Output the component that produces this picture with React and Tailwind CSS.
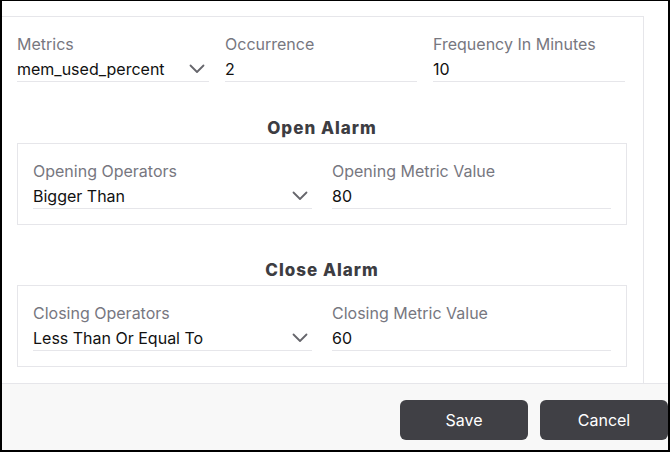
import React from 'react';

const font = { fontFamily: 'Inter, "Open Sans", sans-serif' };

function Chevron() {
  return (
    <svg width="16" height="10" viewBox="0 0 16 10" className="shrink-0 text-[#66666c]">
      <polyline points="1.5,1.5 8,8 14.5,1.5" fill="none" stroke="currentColor" strokeWidth="1.8" strokeLinecap="round" strokeLinejoin="round" />
    </svg>
  );
}

function Field({ label, value, select }) {
  return (
    <div className="flex flex-col min-w-0">
      <span className="text-[16px] leading-6 text-[#77777f]">{label}</span>
      <div className="flex items-center justify-between h-[26px] border-b border-[#e6e6ea] pr-[4px]">
        <span className="text-[16px] leading-6 text-[#111]">{value}</span>
        {select && <Chevron />}
      </div>
    </div>
  );
}

function AlarmBox({ title, fields }) {
  return (
    <div className="w-[610px]">
      <h3 className="text-center text-[17px] leading-6 font-extrabold tracking-[1px] text-[#3d3d42]">{title}</h3>
      <div className="mt-[3px] h-[82px] border border-[#e6e6ea] px-[15px] pt-[15px] grid grid-cols-2 gap-5">
        {fields.map((f) => (
          <Field key={f.label} {...f} />
        ))}
      </div>
    </div>
  );
}

export default function App() {
  return (
    <div style={font} className="w-[670px] h-[452px] bg-white border-l-2 border-r-2 border-t border-b-2 border-black flex flex-col overflow-hidden">
      <div className="flex-1 pt-[15px] min-h-0">
        <div className="w-[642px] h-full border-t border-r border-[#e6e6ea] pl-[15px] pt-[15px]">
          <div className="w-[608px] grid grid-cols-3 gap-4">
            <Field label="Metrics" value="mem_used_percent" select />
            <Field label="Occurrence" value="2" />
            <Field label="Frequency In Minutes" value="10" />
          </div>
          <div className="mt-[34px]">
            <AlarmBox
              title="Open Alarm"
              fields={[
                { label: 'Opening Operators', value: 'Bigger Than', select: true },
                { label: 'Opening Metric Value', value: '80' },
              ]}
            />
          </div>
          <div className="mt-[33px]">
            <AlarmBox
              title="Close Alarm"
              fields={[
                { label: 'Closing Operators', value: 'Less Than Or Equal To', select: true },
                { label: 'Closing Metric Value', value: '60' },
              ]}
            />
          </div>
        </div>
      </div>
      <div className="h-[67px] shrink-0 border-t border-[#e6e6ea] bg-[#f8f8f8] flex items-start justify-end gap-3 pt-4">
        <button type="button" className="w-32 h-10 rounded-md bg-[#404045] text-white text-[16px]">
          Save
        </button>
        <button type="button" className="w-32 h-10 rounded-md bg-[#404045] text-white text-[16px]">
          Cancel
        </button>
      </div>
    </div>
  );
}
